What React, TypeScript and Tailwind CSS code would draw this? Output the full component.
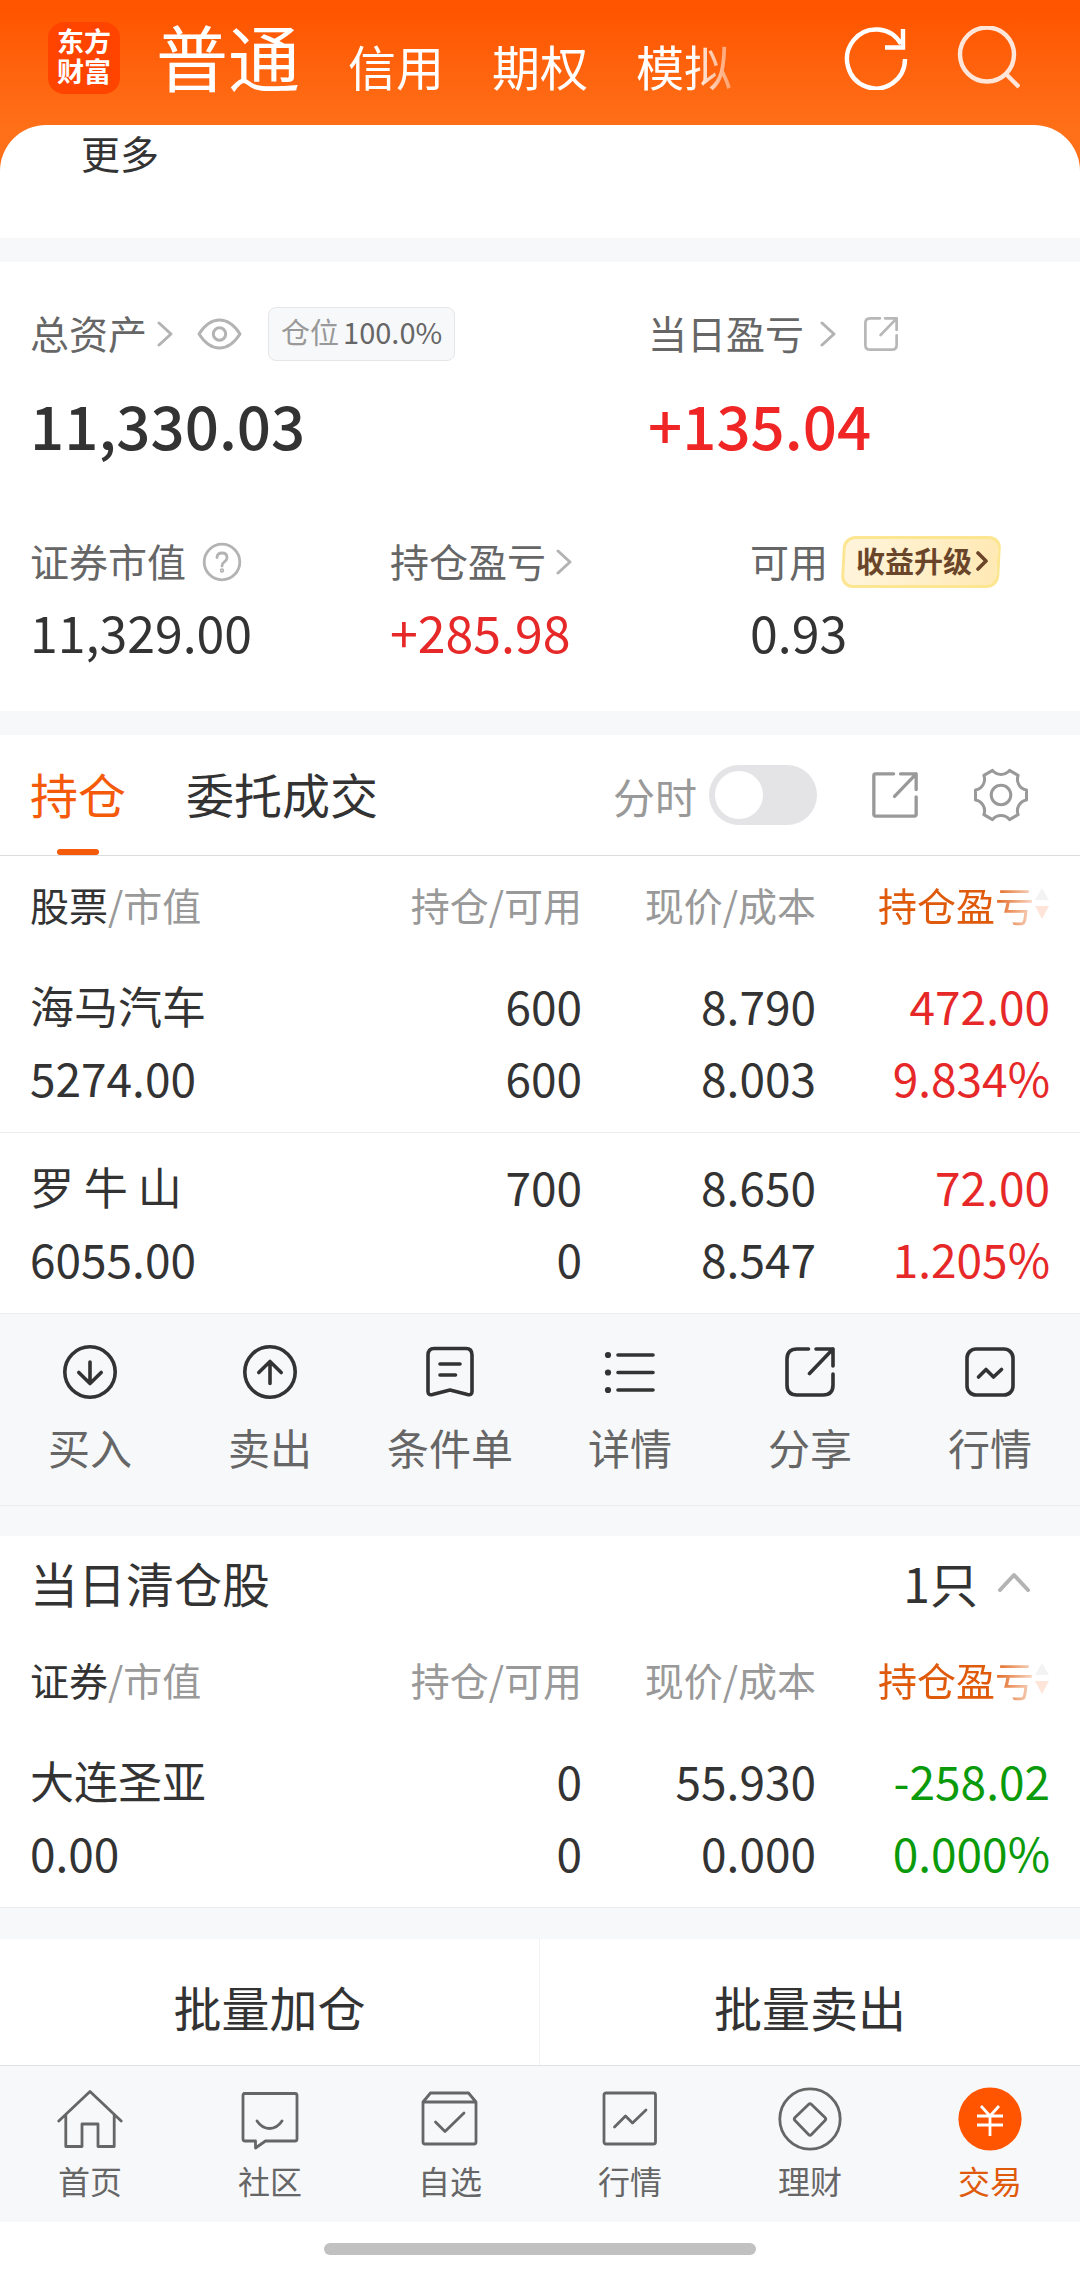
import type { ReactNode } from 'react';

interface Holding {
  name: string;
  value: string;
  held: string;
  usable: string;
  price: string;
  cost: string;
  profit: string;
  rate: string;
  down?: boolean;
}

const HOLDINGS: Holding[] = [
  { name: '海马汽车', value: '5274.00', held: '600', usable: '600', price: '8.790', cost: '8.003', profit: '472.00', rate: '9.834%' },
  { name: '罗 牛 山', value: '6055.00', held: '700', usable: '0', price: '8.650', cost: '8.547', profit: '72.00', rate: '1.205%' },
];

const CLEARED: Holding[] = [
  { name: '大连圣亚', value: '0.00', held: '0', usable: '0', price: '55.930', cost: '0.000', profit: '-258.02', rate: '0.000%', down: true },
];

function Chevron() {
  return (
    <svg className="w-4 h-[26px] shrink-0" viewBox="0 0 16 26" fill="none" stroke="#b3b3b3" strokeWidth={3} strokeLinecap="round" strokeLinejoin="round">
      <path d="M2 2 L14 13 L2 24" />
    </svg>
  );
}

function ShareIcon({ className, r, stroke }: { className: string; r: number; stroke: number }) {
  const d = `M26.5 5 H${5 + r} Q5 5 5 ${5 + r} V${51 - r} Q5 51 ${5 + r} 51 H${51 - r} Q51 51 51 ${51 - r} V30 M34 5 H51 V22 M51 5 L27.5 29.5`;
  return (
    <svg className={className} viewBox="3 3 50 50" fill="none" stroke="currentColor" strokeWidth={stroke} strokeLinecap="round" strokeLinejoin="round">
      <path d={d} />
    </svg>
  );
}

function ActionSvg({ children }: { children: ReactNode }) {
  return (
    <svg className="size-14" viewBox="0 0 56 56" fill="none" stroke="currentColor" strokeWidth={3.6} strokeLinecap="round" strokeLinejoin="round">
      {children}
    </svg>
  );
}

const ACTIONS: { label: string; icon: ReactNode }[] = [
  {
    label: '买入',
    icon: (
      <ActionSvg>
        <circle cx={28} cy={28} r={25.2} />
        <path d="M28 18 V39.5 M16.8 28.5 L28 39.5 L39.2 28.5" />
      </ActionSvg>
    ),
  },
  {
    label: '卖出',
    icon: (
      <ActionSvg>
        <circle cx={28} cy={28} r={25.2} />
        <path d="M28 39.5 V18 M16.8 28.5 L28 17.5 L39.2 28.5" />
      </ActionSvg>
    ),
  },
  {
    label: '条件单',
    icon: (
      <ActionSvg>
        <path d="M6 11 Q6 4.5 12 4.5 H44 Q50 4.5 50 11 V47.5 Q50 51.5 45.5 50.5 L28 46 L10.5 50.5 Q6 51.5 6 47.5 Z" />
        <path d="M18 20 H38 M18 31 H33.5" />
      </ActionSvg>
    ),
  },
  {
    label: '详情',
    icon: (
      <ActionSvg>
        <path d="M16 11 H51 M16 28.5 H51 M16 46 H51" />
        <g fill="currentColor" stroke="none">
          <circle cx={6} cy={11} r={3.1} />
          <circle cx={6} cy={28.5} r={3.1} />
          <circle cx={6} cy={46} r={3.1} />
        </g>
      </ActionSvg>
    ),
  },
  { label: '分享', icon: <ShareIcon className="size-[50px]" r={10} stroke={3.6} /> },
  {
    label: '行情',
    icon: (
      <ActionSvg>
        <rect x={5} y={5} width={46} height={46} rx={9} />
        <path d="M16.5 33 L24 25.5 L31.5 33 L39.5 25.5" />
      </ActionSvg>
    ),
  },
];

function TabSvg({ children }: { children: ReactNode }) {
  return (
    <svg className="size-[66px]" viewBox="0 0 66 66" fill="none" stroke="currentColor" strokeWidth={2.8} strokeLinecap="round" strokeLinejoin="round">
      {children}
    </svg>
  );
}

const TABS: { label: string; active?: boolean; icon: ReactNode }[] = [
  {
    label: '首页',
    icon: (
      <TabSvg>
        <path d="M1.8 35 L33 5.5 L64.2 35 M8.8 29 V60.5 H25 V38 H41 V60.5 H57.2 V29" />
      </TabSvg>
    ),
  },
  {
    label: '社区',
    icon: (
      <TabSvg>
        <path d="M7 7.5 H58 Q60 7.5 60 9.5 V53 Q60 55 58 55 H28.5 L18.5 62 V55 H8 Q6 55 6 53 V9.5 Q6 7.5 8 7.5" />
        <path d="M20 35 Q25 42.5 32.5 42.5 Q40 42.5 45 35" />
      </TabSvg>
    ),
  },
  {
    label: '自选',
    icon: (
      <TabSvg>
        <path d="M6 16 L13.5 7 H51.5 L59 16 V56 Q59 58 57 58 H8 Q6 58 6 56 Z M6 16 H59 M18.5 36 L28 45.5 L47 27" />
      </TabSvg>
    ),
  },
  {
    label: '行情',
    icon: (
      <TabSvg>
        <rect x={7} y={7} width={51.5} height={51} rx={2} />
        <path d="M17.5 41 L28.5 30 L35.5 37 L49 24" />
      </TabSvg>
    ),
  },
  {
    label: '理财',
    icon: (
      <TabSvg>
        <circle cx={33} cy={33} r={30.2} />
        <path d="M31.5 18.5 Q33 17 34.5 18.5 L48 31.5 Q49.5 33 48 34.5 L34.5 48.5 Q33 50 31.5 48.5 L18 34.5 Q16.5 33 18 31.5 Z" />
      </TabSvg>
    ),
  },
  {
    label: '交易',
    active: true,
    icon: (
      <TabSvg>
        <circle cx={33} cy={33} r={31.6} fill="#ff5500" stroke="none" />
        <path d="M24 20 L33 30 L42 20 M20 30 H46 M20 39 H46 M33 30 V50" stroke="#fff" strokeLinecap="butt" />
      </TabSvg>
    ),
  },
];

function HoldingTable({ first, rows }: { first: string; rows: Holding[] }) {
  return (
    <table className="w-full table-fixed text-right">
      <thead>
        <tr className="h-[95px] text-[39px] leading-[56px] text-[#999]">
          <th scope="col" className="pl-[30px] text-left font-normal">
            <span className="text-[#333]">{first}</span>/市值
          </th>
          <th scope="col" className="w-[200px] font-normal">持仓/可用</th>
          <th scope="col" className="w-[234px] font-normal">现价/成本</th>
          <th scope="col" className="w-[264px] pr-[30px] font-normal">
            <button className="inline-flex items-center align-top text-[#e05a0c] [mask-image:linear-gradient(to_right,#000_66%,rgba(0,0,0,0.18)_92%)]">
              持仓盈亏
              <svg className="w-4 h-8" viewBox="0 0 16 32">
                <path d="M8 0 L15 12 H1 Z" fill="#bbb" />
                <path d="M8 31 L15 18 H1 Z" fill="#ff6a2a" />
              </svg>
            </button>
          </th>
        </tr>
      </thead>
      <tbody>
        {rows.map((h) => (
          <tr key={h.name} className="h-[181px] border-b border-[#ececec] text-[46px] leading-[72px] text-[#333]">
            <td className="pl-[30px] pb-px text-left">
              <p className="text-[44px]">{h.name}</p>
              <p>{h.value}</p>
            </td>
            <td className="pb-px">
              <p>{h.held}</p>
              <p>{h.usable}</p>
            </td>
            <td className="pb-px">
              <p>{h.price}</p>
              <p>{h.cost}</p>
            </td>
            <td className={h.down ? 'pr-[30px] pb-px text-[#0a9a0a]' : 'pr-[30px] pb-px text-[#e62828]'}>
              <p>{h.profit}</p>
              <p>{h.rate}</p>
            </td>
          </tr>
        ))}
      </tbody>
    </table>
  );
}

function Header() {
  return (
    <header className="flex h-[125px] items-center pl-12 pr-[60px] pb-2.5 text-white">
      <div className="flex size-[72px] items-center justify-center rounded-2xl bg-[#ff4400] pb-1">
        <p className="w-[54px] break-all text-[27px] font-bold leading-[30px]">东方财富</p>
      </div>
      <nav className="ml-9 flex items-baseline gap-12 pt-1 text-[48px] leading-[80px] [mask-image:linear-gradient(to_right,#000_93%,transparent_104%)]">
        <button className="text-[72px]">普通</button>
        <button>信用</button>
        <button>期权</button>
        <button>模拟</button>
      </nav>
      <div className="ml-auto flex gap-12">
        <button aria-label="刷新">
          <svg className="size-16" viewBox="0 0 64 64" fill="none" stroke="#fff" strokeWidth={4.4}>
            <path d="M61 33 A29 29.5 0 1 1 57 18 M59 3 V21.5 H41" />
          </svg>
        </button>
        <button aria-label="搜索">
          <svg className="size-16" viewBox="0 0 64 64" fill="none" stroke="#ffe6da" strokeWidth={4.4}>
            <circle cx={31} cy={28.5} r={27} />
            <path d="M49 47 L63 61" />
          </svg>
        </button>
      </div>
    </header>
  );
}

function Assets() {
  return (
    <section className="border-b-24 border-[#f7f8fa] pt-[45px] pb-[50px] text-[39px] text-[#666]">
      <div className="flex">
        <div className="w-3/5 pl-[30px]">
          <div className="flex h-[54px] items-center">
            <a href="#assets" className="flex items-center gap-2.5">
              <span className="pb-1">总资产</span>
              <Chevron />
            </a>
            <button aria-label="显示金额" className="ml-6">
              <svg className="w-[45px] h-8" viewBox="0 0 45 32" fill="none" stroke="#b3b3b3" strokeWidth={3}>
                <path d="M2 16 Q11 2 22.5 2 Q34 2 43 16 Q34 30 22.5 30 Q11 30 2 16 Z" strokeLinejoin="round" />
                <circle cx={22.5} cy={16} r={6.2} />
              </svg>
            </button>
            <span className="ml-[26px] flex h-[54px] items-center gap-1 rounded-lg border border-[#e6e6e6] bg-[#f7f8fa] px-3 pb-1 text-[29px] text-[#666]">
              <span className="text-[#999]">仓位</span>100.0%
            </span>
          </div>
          <p className="mt-[27px] text-[60px] font-medium leading-[72px] text-[#333]">11,330.03</p>
        </div>
        <div className="w-2/5">
          <div className="flex h-[54px] items-center">
            <a href="#today" className="flex items-center gap-4">
              <span className="pb-1">当日盈亏</span>
              <Chevron />
            </a>
            <button aria-label="分享当日盈亏" className="ml-7 text-[#b8b8b8]">
              <ShareIcon className="size-[34px]" r={7} stroke={4} />
            </button>
          </div>
          <p className="mt-[27px] text-[60px] font-medium leading-[72px] text-[#f02626]">+135.04</p>
        </div>
      </div>
      <div className="mt-[76px] grid grid-cols-3">
        <div className="pl-[30px]">
          <div className="flex h-[52px] items-center gap-4">
            <span className="pb-1">证券市值</span>
            <button aria-label="说明">
              <svg className="size-10" viewBox="0 0 40 40" fill="none" stroke="#b3b3b3" strokeWidth={2.8} strokeLinecap="round">
                <circle cx={20} cy={20} r={17.8} />
                <path d="M15 15.5 Q15.2 11 20 11 Q25 11 25 15.5 Q25 18 22.3 19.8 Q20 21.4 20 24" />
                <circle cx={20} cy={28.5} r={0.8} />
              </svg>
            </button>
          </div>
          <p className="mt-[13px] text-[50px] leading-[60px] text-[#333]">11,329.00</p>
        </div>
        <div className="pl-[30px]">
          <a href="#profit" className="flex h-[52px] items-center gap-2.5">
            <span className="pb-1">持仓盈亏</span>
            <Chevron />
          </a>
          <p className="mt-[13px] text-[50px] leading-[60px] text-[#e62828]">+285.98</p>
        </div>
        <div className="pl-[30px]">
          <div className="flex h-[52px] items-center gap-3.5">
            <span className="pb-1">可用</span>
            <button className="relative isolate flex h-[52px] items-center gap-1 pl-3.5 pr-3 pb-0.5 text-[29px] font-bold text-[#6a452a] before:absolute before:inset-0 before:-z-10 before:-skew-x-3 before:rounded-xl before:border-3 before:border-[#fce692] before:bg-linear-to-r before:from-[#fff5dc] before:to-[#ffe9b4]">
              收益升级
              <svg className="w-3 h-5" viewBox="0 0 12 20" fill="none" stroke="currentColor" strokeWidth={3.6} strokeLinecap="round" strokeLinejoin="round">
                <path d="M2 2 L10 10 L2 18" />
              </svg>
            </button>
          </div>
          <p className="mt-[13px] text-[50px] leading-[60px] text-[#333]">0.93</p>
        </div>
      </div>
    </section>
  );
}

function HoldingTabs() {
  return (
    <div className="flex h-[121px] items-center border-b border-[#dcdcdc] pl-[30px] pr-[52px] text-[#999]">
      <div className="flex gap-15 self-stretch text-[48px] text-[#333]">
        <button className="relative pb-1 text-[#f55a0a]">
          持仓
          <span className="absolute bottom-0 left-1/2 h-1.5 w-[42px] -translate-x-1/2 rounded-full bg-[#f55a0a]" />
        </button>
        <button className="pb-1">委托成交</button>
      </div>
      <label className="ml-auto flex items-center gap-3 text-[42px]">
        分时
        <input
          type="checkbox"
          role="switch"
          className="h-[60px] w-[108px] appearance-none rounded-full bg-[#e4e4e6] p-1.5 before:block before:size-12 before:rounded-full before:bg-white checked:bg-[#ff5500] checked:before:ml-auto"
        />
      </label>
      <button aria-label="分享持仓" className="ml-[55px]">
        <ShareIcon className="size-[46px]" r={2} stroke={3.6} />
      </button>
      <button aria-label="设置" className="ml-14">
        <svg className="size-[54px]" viewBox="0 0 54 54" fill="none" stroke="currentColor" strokeWidth={3} strokeLinejoin="round">
          <path d="M52.5 22 V32 A11 11 0 0 0 44.1 46.6 L35.5 51.6 A11 11 0 0 0 18.5 51.6 L9.9 46.6 A11 11 0 0 0 1.5 32 V22 A11 11 0 0 0 9.9 7.4 L18.5 2.4 A11 11 0 0 0 35.5 2.4 L44.1 7.4 A11 11 0 0 0 52.5 22 Z" />
          <circle cx={27} cy={27} r={9.8} />
        </svg>
      </button>
    </div>
  );
}

export default function App() {
  return (
    <div className="min-h-screen bg-white font-['Noto_Sans_CJK_SC',sans-serif] text-[#333]">
      <div className="bg-linear-to-b from-[#ff5500] from-5% to-[#ff7018] to-55%">
        <Header />
        <div className="h-[113px] rounded-t-[46px] bg-white pl-[81px]">
          <a href="#more" className="block text-[39px] leading-[54px]">更多</a>
        </div>
      </div>

      <main>
        <div className="h-6 bg-[#f7f8fa]" />
        <Assets />

        <section>
          <HoldingTabs />
          <HoldingTable first="股票" rows={HOLDINGS} />
          <div className="grid grid-cols-6 border-b border-[#ececee] bg-[#f7f8fa] pt-[30px] pb-[35px]">
            {ACTIONS.map((a) => (
              <button key={a.label} className="flex flex-col items-center gap-6">
                <span className="flex h-14 items-center">{a.icon}</span>
                <span className="text-[42px] leading-[46px] text-[#666]">{a.label}</span>
              </button>
            ))}
          </div>
          <div className="h-[30px] bg-[#f7f8fa]" />
        </section>

        <section>
          <div className="flex h-24 items-center justify-between pl-[30px] pr-[50px] pb-1 text-[48px]">
            <h2>当日清仓股</h2>
            <button className="flex items-center gap-5">
              1只
              <svg className="w-8 h-5" viewBox="0 0 32 20" fill="none" stroke="#b3b3b3" strokeWidth={4} strokeLinecap="round" strokeLinejoin="round">
                <path d="M2 18 L16 3 L30 18" />
              </svg>
            </button>
          </div>
          <HoldingTable first="证券" rows={CLEARED} />
          <div className="h-[31px] bg-[#f7f8fa]" />
        </section>

        <div className="grid h-[126px] grid-cols-2 text-[48px]">
          <button className="border-r border-[#f3f3f3] pt-2">批量加仓</button>
          <button className="pt-2">批量卖出</button>
        </div>
      </main>

      <nav className="grid grid-cols-6 border-t border-[#e2e2e4] bg-[#f7f8fa] pt-5 pb-[22px]">
        {TABS.map((t) => (
          <a key={t.label} href="#tab" className={t.active ? 'flex flex-col items-center gap-2 text-[#e05a0c]' : 'flex flex-col items-center gap-2 text-[#666]'}>
            {t.icon}
            <span className="text-[32px] leading-10">{t.label}</span>
          </a>
        ))}
      </nav>
      <div className="flex h-[54px] items-center justify-center">
        <div className="h-3 w-2/5 rounded-full bg-[#c1c1c1]" />
      </div>
    </div>
  );
}
